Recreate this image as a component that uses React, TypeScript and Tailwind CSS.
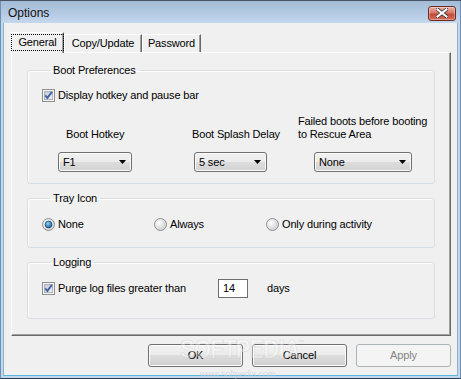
import React from "react";

function CheckBox() {
  return (
    <svg width="13" height="13" viewBox="0 0 13 13" className="shrink-0">
      <defs>
        <linearGradient id="cbg" x1="0" y1="0" x2="1" y2="1">
          <stop offset="0" stopColor="#c3c8d0" />
          <stop offset="1" stopColor="#f4f5f7" />
        </linearGradient>
      </defs>
      <rect x="0.5" y="0.5" width="12" height="12" fill="#f6f6f6" stroke="#8e8f8f" />
      <rect x="2.5" y="2.5" width="8" height="8" fill="url(#cbg)" stroke="#aeb3b9" />
      <path d="M3.2 6.3 L5.4 8.9 L9.9 2.9" fill="none" stroke="#4565a8" strokeWidth="1.9" />
    </svg>
  );
}

function Radio({ checked }: { checked?: boolean }) {
  return (
    <svg width="13" height="13" viewBox="0 0 13 13" className="shrink-0">
      <defs>
        <radialGradient id="rgg" cx="0.35" cy="0.35" r="0.8">
          <stop offset="0" stopColor="#ffffff" />
          <stop offset="1" stopColor="#c4c6ca" />
        </radialGradient>
        <radialGradient id="rbb" cx="0.4" cy="0.35" r="0.75">
          <stop offset="0" stopColor="#8ad8ff" />
          <stop offset="1" stopColor="#0c4c86" />
        </radialGradient>
      </defs>
      <circle cx="6.5" cy="6.5" r="6" fill="url(#rgg)" stroke="#8e8f8f" />
      {checked && <circle cx="6.5" cy="6.5" r="3.4" fill="url(#rbb)" stroke="#1d3f66" strokeWidth="0.7" />}
    </svg>
  );
}

function Arrow() {
  return (
    <svg width="7" height="4" viewBox="0 0 7 4" className="shrink-0">
      <path d="M0 0 H7 L3.5 4 Z" fill="#000" />
    </svg>
  );
}

function Dropdown({ value, w }: { value: string; w: string }) {
  return (
    <div
      className={`${w} h-[20px] flex items-center justify-between pl-[4px] pr-[5px] rounded-[3px] border border-[#707070] bg-[linear-gradient(#f2f2f2_0%,#ebebeb_50%,#dddddd_50%,#d2d2d2_100%)] shadow-[inset_0_0_0_1px_#fbfbfb]`}
    >
      <span className="leading-[13px]">{value}</span>
      <Arrow />
    </div>
  );
}

function Button({ label, disabled }: { label: string; disabled?: boolean }) {
  return (
    <div
      className={
        disabled
          ? "w-[95px] h-[23px] flex items-center justify-center rounded-[3px] border border-[#adb2b5] bg-[#f4f4f4] text-[#838383]"
          : "w-[95px] h-[23px] flex items-center justify-center rounded-[3px] border border-[#707070] bg-[linear-gradient(#f2f2f2_0%,#ebebeb_50%,#dddddd_50%,#cfcfcf_100%)] shadow-[inset_0_0_0_1px_#fcfcfc]"
      }
    >
      {label}
    </div>
  );
}

function Group({ title, children, className }: { title: string; children: React.ReactNode; className?: string }) {
  return (
    <fieldset className={`w-[408px] border border-[#d5dfe5] rounded-[3px] shadow-[inset_1px_1px_0_#ffffff] ${className ?? ""}`}>
      <legend className="ml-[8px] px-[3px] leading-[13px]">{title}</legend>
      {children}
    </fieldset>
  );
}

export default function App() {
  return (
    <div className="w-[461px] h-[379px] flex flex-col bg-[#c2d6ec] border-t border-t-[#4a5563] font-['Liberation_Sans',Arial,sans-serif] text-[11px] tracking-[-0.15px] text-black select-none overflow-hidden relative">
      {/* Title bar */}
      <div className="h-[22px] flex items-center justify-between pl-[7px] pr-[4px] bg-[linear-gradient(#a3bbd6,#c3d7ed)] border-l border-r border-l-[#6d8fb5] border-r-[#6d8fb5]">
        <span className="text-[12px] leading-[14px] pt-[2px] tracking-normal text-[#111]">Options</span>
        <div className="w-[28px] h-[15px] mt-[2px] rounded-[3px] border border-[#6a2b26] bg-[linear-gradient(#eab0a2_0%,#d8786a_45%,#c24a3a_55%,#d26b55_100%)] flex items-center justify-center shadow-[inset_0_0_0_1px_rgba(255,255,255,0.35)]">
          <svg width="12" height="10" viewBox="0 0 12 10">
            <path d="M1.5 1.5 L10.5 8.5 M10.5 1.5 L1.5 8.5" stroke="#3b3b3b" strokeWidth="3.6" strokeLinecap="square" />
            <path d="M1.5 1.5 L10.5 8.5 M10.5 1.5 L1.5 8.5" stroke="#ffffff" strokeWidth="2" strokeLinecap="square" />
          </svg>
        </div>
      </div>

      {/* Frame + body */}
      <div className="flex-1 flex border-l border-r border-b border-l-[#6d8fb5] border-r-[#6d8fb5] border-b-[#2d3c4c] px-[2px] pb-[2px] bg-[#c2d6ec]">
        <div className="flex-1 flex flex-col bg-[#f0f0f0] border-l border-r border-b border-l-[#8fb0d0] border-r-[#8fb0d0] border-b-[#5ab6dc]">
          {/* Tabs */}
          <div className="mt-[9px] ml-[7px] h-[20px] flex items-end">
            <div className="relative z-10 -mb-[1px] h-[21px] w-[53px] flex items-start justify-center pt-[1px] bg-[#f0f0f0] border-t border-l border-white border-r border-r-[#696969] shadow-[inset_-1px_0_0_#a0a0a0]">
              <span className="h-[17px] px-[6px] flex items-center border border-dotted border-black leading-[13px]">General</span>
            </div>
            <div className="h-[18px] w-[78px] flex items-center justify-center bg-[#f0f0f0] border-t border-l border-white border-r border-r-[#696969] shadow-[inset_-1px_0_0_#a0a0a0] leading-[13px]">
              Copy/Update
            </div>
            <div className="h-[18px] w-[59px] flex items-center justify-center bg-[#f0f0f0] border-t border-l border-white border-r border-r-[#696969] shadow-[inset_-1px_0_0_#a0a0a0] leading-[13px]">
              Password
            </div>
          </div>

          {/* Panel */}
          <div className="ml-[7px] w-[440px] h-[284px] border-t border-l border-white border-r border-b border-r-[#696969] border-b-[#696969] shadow-[inset_-1px_-1px_0_#a0a0a0] pt-[11px] pl-[15px] flex flex-col gap-[8px]">
            <Group title="Boot Preferences" className="pl-[14px] pb-[11px]">
              <div className="mt-[12px] h-[13px] flex items-center">
                <CheckBox />
                <span className="ml-[3px] leading-[13px]">Display hotkey and pause bar</span>
              </div>
              <div className="mt-[13px] ml-[16px] flex items-end">
                <div className="w-[134px] flex flex-col">
                  <span className="ml-[8px] leading-[13px]">Boot Hotkey</span>
                  <div className="mt-[11px]">
                    <Dropdown value="F1" w="w-[74px]" />
                  </div>
                </div>
                <div className="w-[106px] flex flex-col">
                  <span className="leading-[13px]">Boot Splash Delay</span>
                  <div className="mt-[11px] ml-[2px]">
                    <Dropdown value="5 sec" w="w-[73px]" />
                  </div>
                </div>
                <div className="flex flex-col">
                  <span className="leading-[13px]">
                    Failed boots before booting
                    <br />
                    to Rescue Area
                  </span>
                  <div className="mt-[11px] ml-[16px]">
                    <Dropdown value="None" w="w-[98px]" />
                  </div>
                </div>
              </div>
            </Group>

            <Group title="Tray Icon" className="pl-[14px] pb-[16px]">
              <div className="mt-[13px] h-[13px] flex items-center">
                <div className="w-[112px] flex items-center">
                  <Radio checked />
                  <span className="ml-[3px] leading-[13px]">None</span>
                </div>
                <div className="w-[112px] flex items-center">
                  <Radio />
                  <span className="ml-[3px] leading-[13px]">Always</span>
                </div>
                <div className="flex items-center">
                  <Radio />
                  <span className="ml-[3px] leading-[13px]">Only during activity</span>
                </div>
              </div>
            </Group>

            <Group title="Logging" className="pl-[14px] pb-[20px]">
              <div className="mt-[10px] h-[19px] flex items-center">
                <CheckBox />
                <span className="ml-[3px] w-[160px] leading-[13px]">Purge log files greater than</span>
                <div className="w-[30px] h-[19px] border border-[#6e6e6e] bg-white pl-[4px] flex items-center leading-[13px]">14</div>
                <span className="ml-[19px] leading-[13px]">days</span>
              </div>
            </Group>
          </div>

          {/* Buttons */}
          <div className="mt-[8px] ml-[144px] flex gap-[9px]">
            <Button label="OK" />
            <Button label="Cancel" />
            <Button label="Apply" disabled />
          </div>
        </div>
      </div>

      {/* Softpedia watermark overlay */}
      <span className="absolute left-[180px] top-[335px] pointer-events-none text-[26px] font-bold leading-[26px] tracking-[-1px] text-[rgba(255,255,255,0.35)] [-webkit-text-stroke:0.6px_rgba(200,200,200,0.55)] scale-x-[0.85] origin-left">
        SOFTPEDIA
      </span>
      <span className="absolute left-[298px] top-[338px] text-[6px] leading-[6px] text-[rgba(200,200,200,0.6)] pointer-events-none">™</span>
      <span className="absolute left-[200px] top-[369px] text-[9px] leading-[9px] text-[rgba(200,210,225,0.7)] pointer-events-none">www.softpedia.com</span>
    </div>
  );
}
